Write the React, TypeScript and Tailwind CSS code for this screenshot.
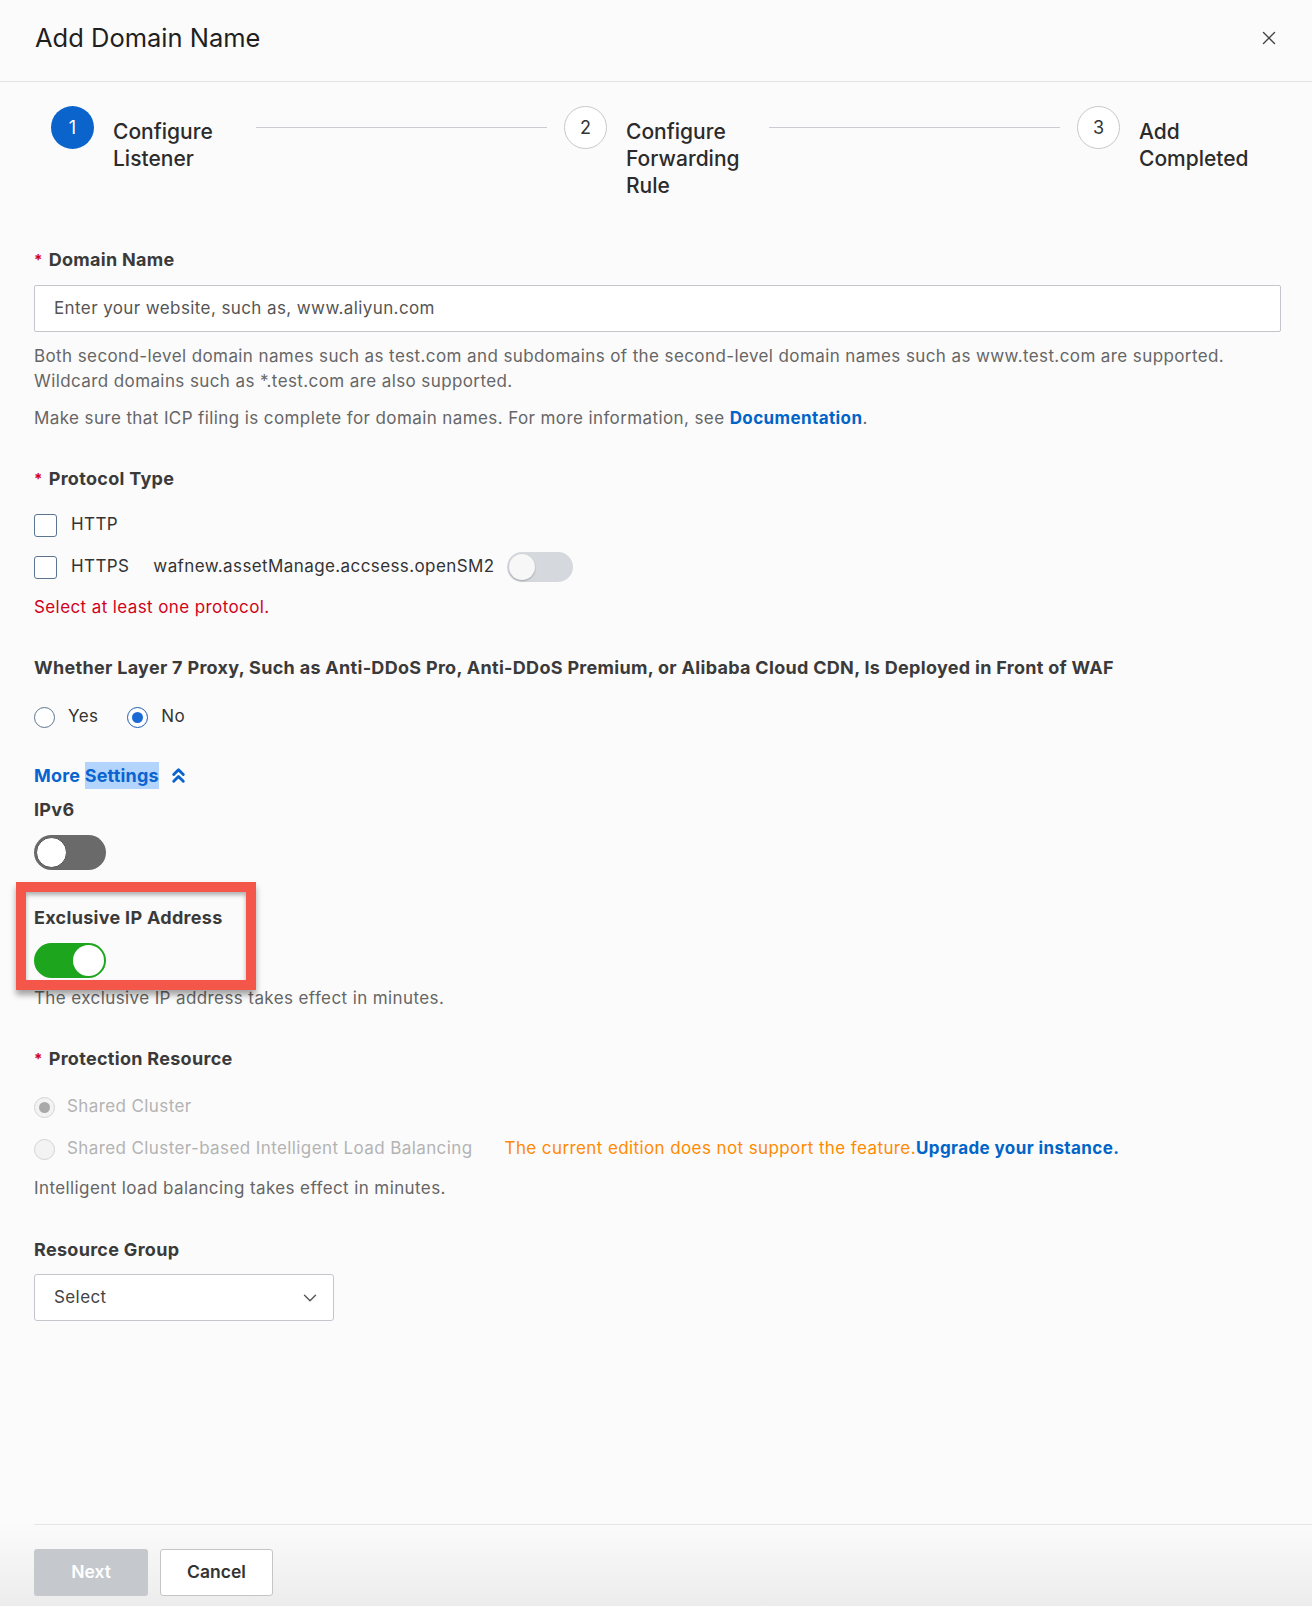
import { X, ChevronsUp, ChevronDown } from "lucide-react";

const steps = [
  { n: 1, lines: ["Configure", "Listener"], active: true },
  { n: 2, lines: ["Configure", "Forwarding", "Rule"], active: false },
  { n: 3, lines: ["Add", "Completed"], active: false },
];

const Required = () => <span className="text-[#d0021b] mr-[6px] text-[15px] align-top">*</span>;

const Label = ({ children, required, className = "" }: { children: React.ReactNode; required?: boolean; className?: string }) => (
  <div className={`text-[18px] leading-[24px] font-bold tracking-[0.3px] text-[#3a3a3a] ${className}`}>
    {required && <Required />}
    {children}
  </div>
);

const Checkbox = () => (
  <span className="w-[23px] h-[23px] rounded-[3px] border-[1.5px] border-[#5b7590] bg-white shrink-0" />
);

const Radio = ({ checked, disabled }: { checked?: boolean; disabled?: boolean }) => {
  if (disabled) {
    return (
      <span className="w-[21px] h-[21px] rounded-full border border-[#d3d3d3] bg-[#f3f3f3] flex items-center justify-center shrink-0">
        {checked && <span className="w-[11px] h-[11px] rounded-full bg-[#a9a9a9]" />}
      </span>
    );
  }
  return (
    <span
      className={`w-[21px] h-[21px] rounded-full border-[1.5px] bg-white flex items-center justify-center shrink-0 ${
        checked ? "border-[#1d5bb0]" : "border-[#5b7590]"
      }`}
    >
      {checked && <span className="w-[11px] h-[11px] rounded-full bg-[#1a6ad6]" />}
    </span>
  );
};

export default function App() {
  return (
    <div className="relative w-full h-[1606px] overflow-hidden bg-[#fbfbfb] font-['Inter','Noto_Sans',sans-serif] text-[#333]">
      {/* header */}
      <div className="flex items-center justify-between h-[82px] pb-[6px] pl-[35px] pr-[32px] border-b border-[#e4e4e4]">
        <h1 className="text-[25.5px] leading-[32px] font-normal text-[#1f1f1f]">Add Domain Name</h1>
        <X className="w-[22px] h-[22px] text-[#444]" strokeWidth={1.5} />
      </div>

      {/* steps */}
      <div className="flex pl-[51px] pr-[31px] mt-[24px]">
        {steps.map((s, i) => (
          <div key={s.n} className={`flex items-start ${i < 2 ? "w-[513px]" : ""}`}>
            <div
              className={`w-[43px] h-[43px] rounded-full flex items-center justify-center text-[18px] shrink-0 ${
                s.active ? "bg-[#0b63cc] text-white" : "bg-white border border-[#c8c8c8] text-[#333]"
              }`}
            >
              {s.n}
            </div>
            <div className="ml-[19px] mt-[12px] w-[122px] text-[21px] leading-[27px] font-medium text-[#2b2b2b]">
              {s.lines.map((l) => (
                <div key={l}>{l}</div>
              ))}
            </div>
            {i < 2 && <div className="flex-1 h-px bg-[#c9ccd1] mt-[21px] ml-[21px] mr-[17px]" />}
          </div>
        ))}
      </div>

      {/* form */}
      <div className="pl-[34px] pr-[31px] mt-[49px] text-[17px] tracking-[0.4px]">
        <Label required>Domain Name</Label>
        <div className="mt-[13px] h-[47px] border border-[#c4c6cc] rounded-[2px] bg-white flex items-center pl-[19px] text-[#555]">
          Enter your website, such as, www.aliyun.com
        </div>
        <p className="mt-[12px] leading-[25px] text-[#666]">
          Both second-level domain names such as test.com and subdomains of the second-level domain names such as www.test.com are supported.
          <br />
          Wildcard domains such as *.test.com are also supported.
        </p>
        <p className="mt-[12px] leading-[25px] text-[#666]">
          Make sure that ICP filing is complete for domain names. For more information, see{" "}
          <span className="text-[#0064c8] font-bold">Documentation</span>.
        </p>

        <Label required className="mt-[36px]">Protocol Type</Label>
        <div className="mt-[19px] h-[30px] flex items-center">
          <Checkbox />
          <span className="ml-[14px] text-[#333]">HTTP</span>
        </div>
        <div className="mt-[12px] h-[30px] flex items-center">
          <Checkbox />
          <span className="ml-[14px] text-[#333]">HTTPS</span>
          <span className="ml-[24px] text-[#333]">wafnew.assetManage.accsess.openSM2</span>
          <span className="ml-[12px] w-[66px] h-[30px] rounded-full bg-[#d5d8dd] flex items-center pl-[2px]">
            <span className="w-[26px] h-[26px] rounded-full bg-[#f7f7f7] shadow-[0_1px_2px_rgba(0,0,0,0.25)]" />
          </span>
        </div>
        <div className="mt-[13px] leading-[24px] text-[#d0021b]">Select at least one protocol.</div>

        <Label className="mt-[37px]">
          Whether Layer 7 Proxy, Such as Anti-DDoS Pro, Anti-DDoS Premium, or Alibaba Cloud CDN, Is Deployed in Front of WAF
        </Label>
        <div className="mt-[25px] h-[24px] flex items-center">
          <Radio />
          <span className="ml-[13px]">Yes</span>
          <span className="ml-[29px]" />
          <Radio checked />
          <span className="ml-[13px]">No</span>
        </div>

        <div className="mt-[34px] h-[24px] flex items-center text-[18px] font-bold tracking-[0.2px] text-[#0a64d0]">
          <span>More&nbsp;</span>
          <span className="bg-[#b3d4fc]">Settings</span>
          <ChevronsUp className="ml-[8px] w-[23px] h-[23px]" strokeWidth={3} />
        </div>

        <Label className="mt-[11px]">IPv6</Label>
        <div className="mt-[13px] w-[72px] h-[35px] rounded-full bg-[#6a6a6a] flex items-center pl-[2px]">
          <span className="w-[31px] h-[31px] rounded-full bg-white border border-[#555]" />
        </div>

        <Label className="mt-[36px]">Exclusive IP Address</Label>
        <div className="mt-[13px] w-[72px] h-[35px] rounded-full bg-[#1ea51e] flex items-center justify-end pr-[2px]">
          <span className="w-[31px] h-[31px] rounded-full bg-white" />
        </div>
        <div className="mt-[8px] leading-[24px] text-[#666]">The exclusive IP address takes effect in minutes.</div>

        <Label required className="mt-[37px]">Protection Resource</Label>
        <div className="mt-[24px] h-[24px] flex items-center">
          <Radio checked disabled />
          <span className="ml-[12px] text-[#b3b3b3]">Shared Cluster</span>
        </div>
        <div className="mt-[18px] h-[24px] flex items-center">
          <Radio disabled />
          <span className="ml-[12px] text-[#b3b3b3]">Shared Cluster-based Intelligent Load Balancing</span>
          <span className="ml-[32px] text-[#ff8a00]">The current edition does not support the feature.</span>
          <span className="text-[#0064c8] font-bold">Upgrade your instance.</span>
        </div>
        <div className="mt-[15px] leading-[24px] text-[#666]">Intelligent load balancing takes effect in minutes.</div>

        <Label className="mt-[38px]">Resource Group</Label>
        <div className="mt-[12px] w-[300px] h-[47px] border border-[#c4c6cc] rounded-[3px] bg-white flex items-center justify-between pl-[19px] pr-[12px] text-[#444]">
          <span>Select</span>
          <ChevronDown className="w-[22px] h-[22px] text-[#555]" strokeWidth={1.5} />
        </div>
      </div>

      {/* footer */}
      <div className="absolute left-0 right-0 bottom-0 h-[82px] bg-gradient-to-b from-[#fbfbfb] to-[#ececec]">
        <div className="ml-[34px] h-px bg-[#e6e6e6]" />
        <div className="flex ml-[34px] mt-[24px]">
          <button className="w-[114px] h-[47px] rounded-[3px] bg-[#c5c9ce] text-white text-[17.5px] font-semibold">Next</button>
          <button className="ml-[12px] w-[113px] h-[47px] rounded-[3px] bg-white border border-[#c5c5c5] text-[#333] text-[17.5px] font-semibold">
            Cancel
          </button>
        </div>
      </div>

      {/* annotation box */}
      <div className="absolute left-[16px] top-[882px] w-[240px] h-[108px] border-[10px] border-[#f4574a] shadow-[0_5px_6px_rgba(0,0,0,0.35),inset_0_3px_4px_rgba(0,0,0,0.3)]" />
    </div>
  );
}
